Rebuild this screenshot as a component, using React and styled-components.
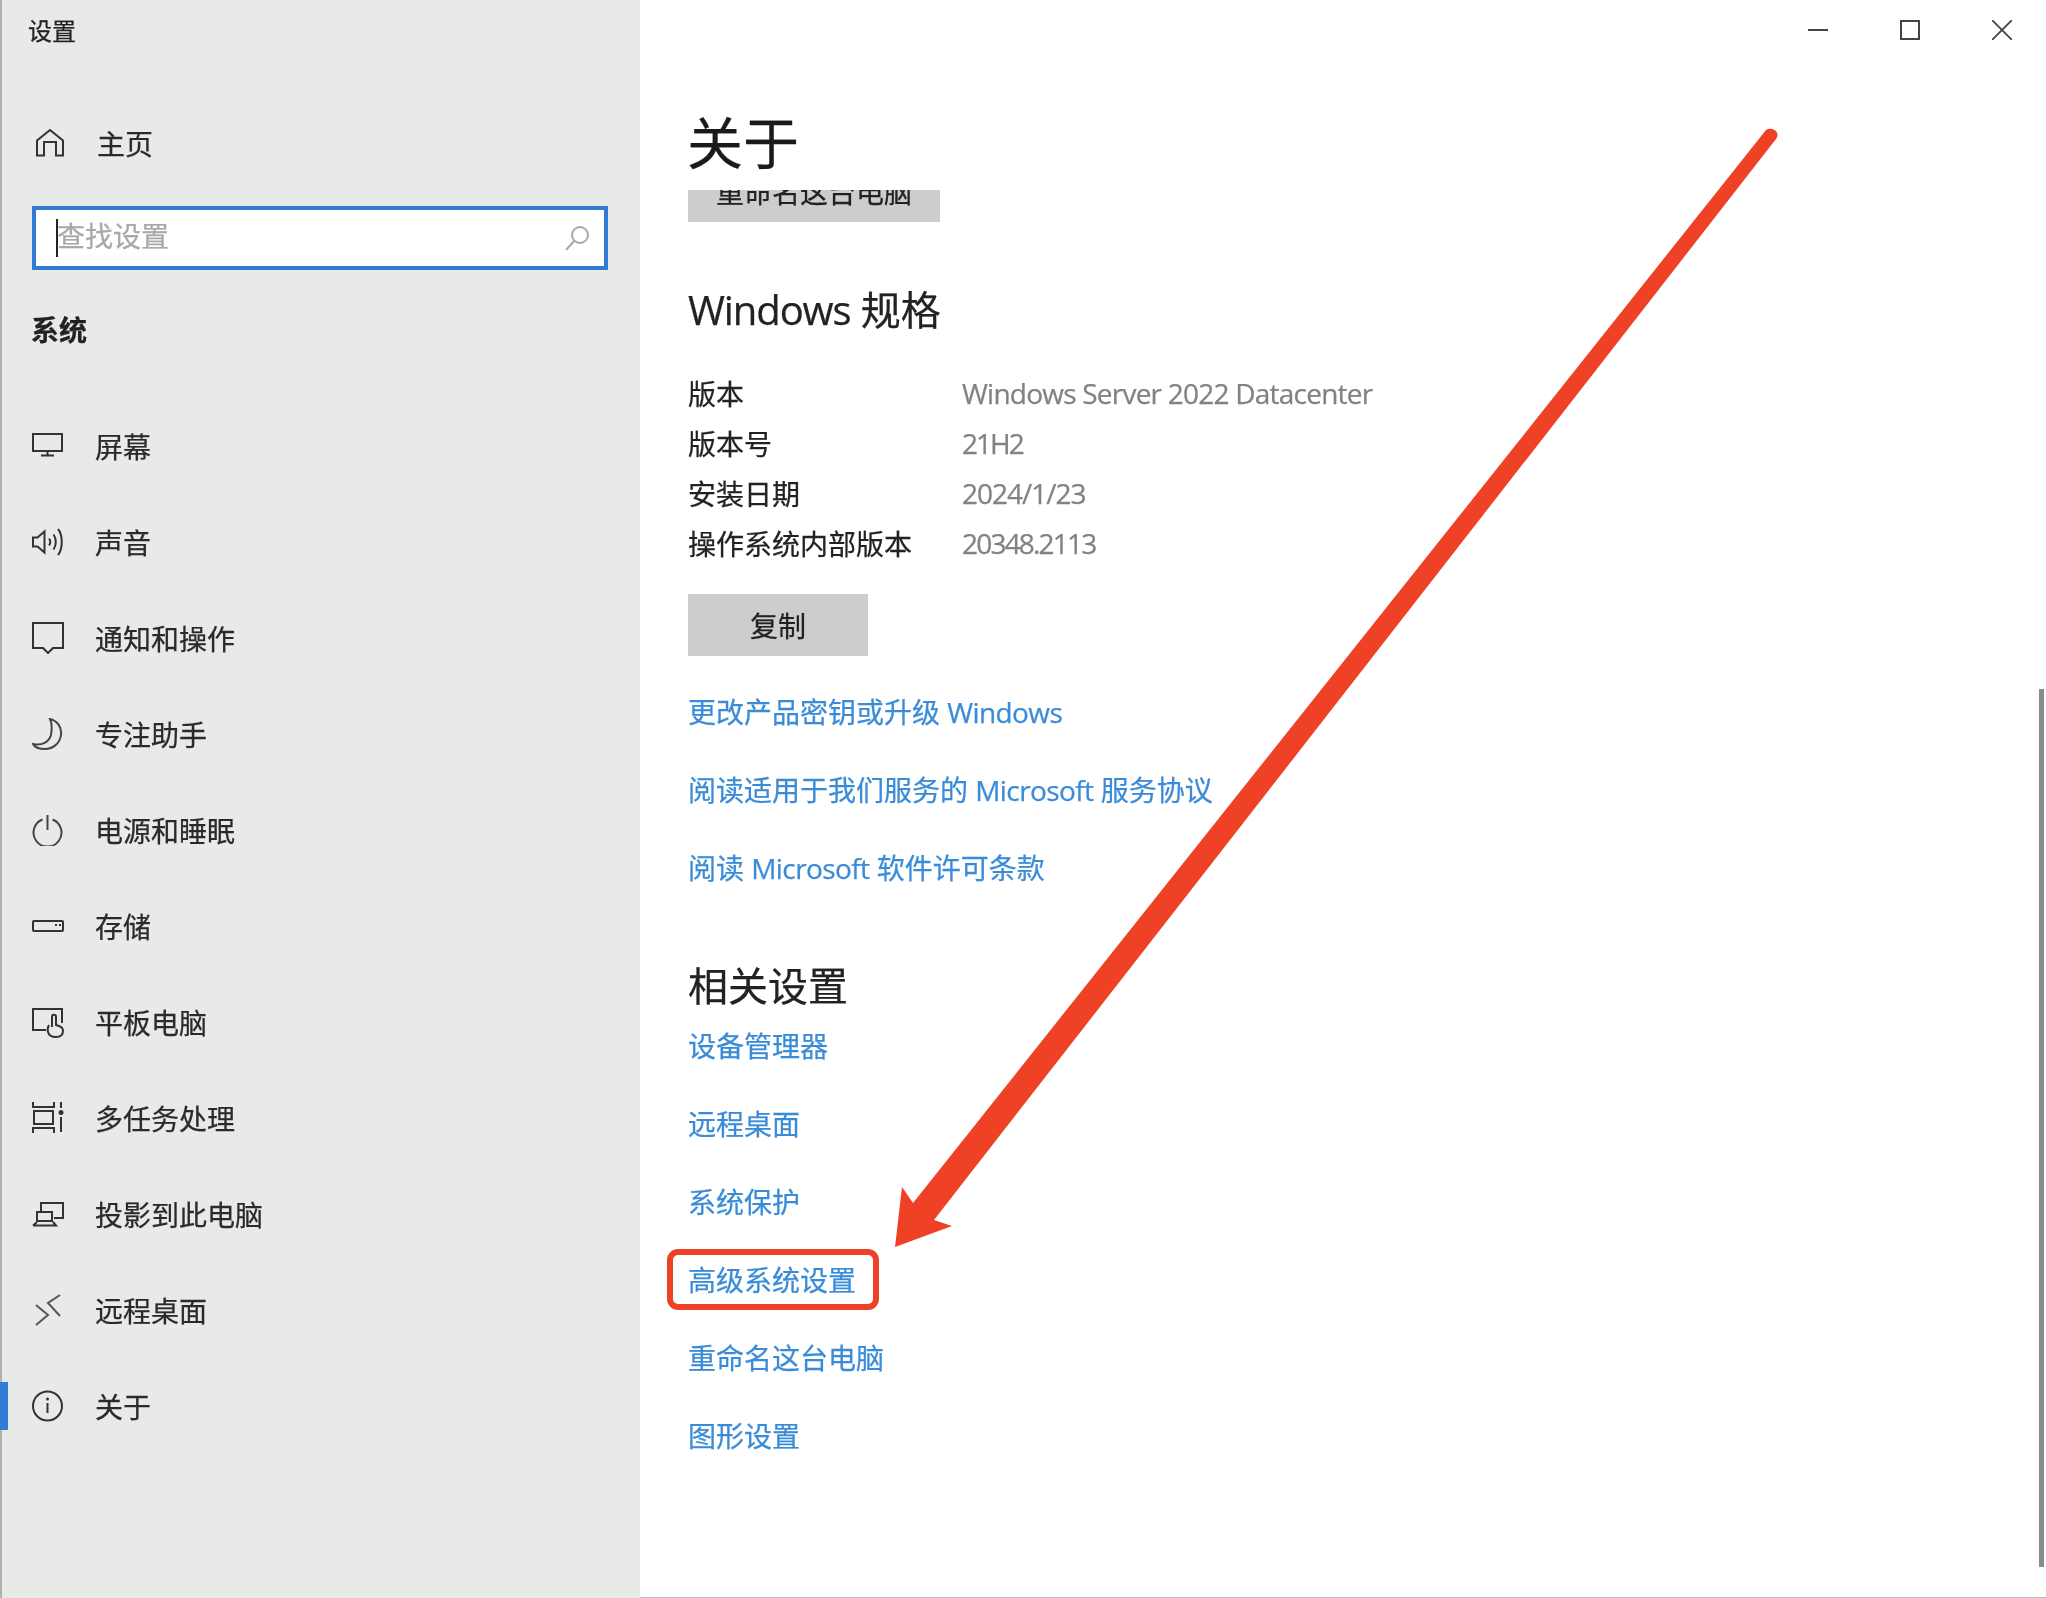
import React from "react";
import styled, { createGlobalStyle } from "styled-components";

const FONT = '"Open Sans", "Noto Sans CJK SC", sans-serif';

const GlobalStyle = createGlobalStyle`
  html, body {
    margin: 0;
    padding: 0;
    background: #fff;
  }
  * {
    box-sizing: border-box;
  }
`;

const Icon = ({ children, color = "#333", sw = 2 }) => (
  <svg width="32" height="32" viewBox="0 0 32 32" fill="none" stroke={color} strokeWidth={sw}>
    {children}
  </svg>
);

const HomeIcon = () => (
  <Icon>
    <path d="M5 28.500V13.500L18 3l13 10.500v15h-7V15H12v13.500z" />
  </Icon>
);
const MonitorIcon = () => (
  <Icon>
    <rect x="1" y="4" width="29" height="17" />
    <path d="M15.500 21v4M9 25.500h13" />
  </Icon>
);
const SoundIcon = () => (
  <Icon>
    <path d="M1 11.500v9h4.500l7 6V5.500l-7 6z" />
    <path d="M17 12.500c1.500 2 1.500 5 0 7M21.500 8.500c3 4 3 11 0 15M26 3c5 6 5 20 0 26" />
  </Icon>
);
const NoteIcon = () => (
  <Icon>
    <path d="M1 1h30v25H21l-5 5-5-5H1z" />
  </Icon>
);
const MoonIcon = () => (
  <Icon color="#444">
    <path d="M18 1c8 2 12 9 11 16-1 9-9 14-16 14-5 0-10-1-12-5 9 2 16-2 18-9 1-6 1-12-1-16z" />
  </Icon>
);
const PowerIcon = () => (
  <Icon color="#444">
    <path d="M10.500 5.500A14 14 0 1 0 20.500 5.500" />
    <path d="M15.500 1v15" />
  </Icon>
);
const StorageIcon = () => (
  <Icon>
    <rect x="1" y="11" width="30" height="10" rx="1" />
    <path d="M23 15h2M27 15h2" />
  </Icon>
);
const TabletIcon = () => (
  <Icon>
    <path d="M14 24H1V3h29v14" />
    <path d="M20 21V11c0-3 4-3 4 0v8l3 1c3 1 4 3 4 5 0 4-3 6-7 6s-7-1-8-5c-1-3 0-5 1-7" />
  </Icon>
);
const MultiIcon = () => (
  <Icon>
    <path d="M1 0v5h21V0M1 31v-5h21v5" />
    <rect x="2" y="9" width="19" height="13" />
    <path d="M29 0v6M29 15v15" />
    <circle cx="29" cy="10.500" r="2.500" fill="#333" stroke="none" />
  </Icon>
);
const ProjectIcon = () => (
  <Icon>
    <path d="M9 13V5h22v15H22" />
    <path d="M5 14h15v9H5zM1 27.500h23l-3-3.500M1 27.500l4-3.500" />
  </Icon>
);
const RemoteIcon = () => (
  <Icon color="#555">
    <path d="M4 11l12 10L4 31M28 1L16 9l12 13" />
  </Icon>
);
const InfoIcon = () => (
  <Icon>
    <circle cx="15.500" cy="16" r="14.500" />
    <path d="M15.500 13v10" />
    <circle cx="15.500" cy="9" r="1.500" fill="#333" stroke="none" />
  </Icon>
);

const NAV_ITEMS = [
  { label: "屏幕", icon: <MonitorIcon /> },
  { label: "声音", icon: <SoundIcon /> },
  { label: "通知和操作", icon: <NoteIcon /> },
  { label: "专注助手", icon: <MoonIcon /> },
  { label: "电源和睡眠", icon: <PowerIcon /> },
  { label: "存储", icon: <StorageIcon /> },
  { label: "平板电脑", icon: <TabletIcon /> },
  { label: "多任务处理", icon: <MultiIcon /> },
  { label: "投影到此电脑", icon: <ProjectIcon /> },
  { label: "远程桌面", icon: <RemoteIcon /> },
  { label: "关于", icon: <InfoIcon />, active: true },
];

// tight: letter spacing that brings the values to the reference's narrower digits
const SPECS = [
  { label: "版本", value: "Windows Server 2022 Datacenter", tight: -0.77 },
  { label: "版本号", value: "21H2", tight: -2 },
  { label: "安装日期", value: "2024/1/23", tight: -1 },
  { label: "操作系统内部版本", value: "20348.2113", tight: -1.8 },
];

const RELATED_LINKS = [
  { label: "设备管理器" },
  { label: "远程桌面" },
  { label: "系统保护" },
  { label: "高级系统设置", marked: true },
  { label: "重命名这台电脑" },
  { label: "图形设置" },
];

export default function App() {
  return (
    <Page lang="zh-CN">
      <GlobalStyle />
      <Sidebar>
        <AppTitle>设置</AppTitle>
        <HomeRow>
          <HomeIcon />
          <RowLabel>主页</RowLabel>
        </HomeRow>
        <SearchBox>
          <Caret />
          <Placeholder>查找设置</Placeholder>
          <svg width="26" height="26" viewBox="0 0 26 26" fill="none" stroke="#a8a8a8" strokeWidth="2">
            <circle cx="16" cy="10" r="8" />
            <path d="M10 16L2 25" />
          </svg>
        </SearchBox>
        <GroupTitle>系统</GroupTitle>
        <NavList>
          {NAV_ITEMS.map((item) => (
            <NavRow key={item.label} $active={item.active}>
              {item.icon}
              <RowLabel>{item.label}</RowLabel>
            </NavRow>
          ))}
        </NavList>
      </Sidebar>
      <Main>
        <WindowBar>
          <svg width="20" height="20" viewBox="0 0 20 20" fill="none" stroke="#444" strokeWidth="2">
            <path d="M0 10h20" />
          </svg>
          <svg width="20" height="20" viewBox="0 0 20 20" fill="none" stroke="#444" strokeWidth="2">
            <rect x="1" y="1" width="18" height="18" />
          </svg>
          <svg width="20" height="20" viewBox="0 0 20 20" fill="none" stroke="#444" strokeWidth="1.800">
            <path d="M0 0l20 20M20 0L0 20" />
          </svg>
        </WindowBar>
        <PageTitle>关于</PageTitle>
        <Scroller>
          <RenameButton>重命名这台电脑</RenameButton>
          <SectionTitle $top={68}>
            <TitleLatin>Windows</TitleLatin> 规格
          </SectionTitle>
          <SpecTable>
            {SPECS.map((spec) => (
              <SpecRow key={spec.label}>
                <SpecLabel>{spec.label}</SpecLabel>
                <SpecValue $tight={spec.tight}>{spec.value}</SpecValue>
              </SpecRow>
            ))}
          </SpecTable>
          <CopyButton>复制</CopyButton>
          <LinkList $top={16}>
            <LinkRow>
              <BlueLink>
                更改产品密钥或升级 <LinkLatin>Windows</LinkLatin>
              </BlueLink>
            </LinkRow>
            <LinkRow>
              <BlueLink>
                阅读适用于我们服务的 <LinkLatin>Microsoft</LinkLatin> 服务协议
              </BlueLink>
            </LinkRow>
            <LinkRow>
              <BlueLink>
                阅读 <LinkLatin>Microsoft</LinkLatin> 软件许可条款
              </BlueLink>
            </LinkRow>
          </LinkList>
          <SectionTitle $top={60}>相关设置</SectionTitle>
          <LinkList $top={0}>
            {RELATED_LINKS.map((link) => (
              <LinkRow key={link.label}>
                <BlueLink>{link.label}</BlueLink>
                {link.marked && <Highlight />}
              </LinkRow>
            ))}
          </LinkList>
        </Scroller>
        <ScrollThumb />
      </Main>
      <ArrowLayer width="2046" height="1598" viewBox="0 0 2046 1598">
        <path
          d="M913 1203L1766 130Q1771 127 1776 131Q1779 135 1776 139L934 1220L952 1226L895 1247L902 1187Z"
          fill="#ee4125"
        />
      </ArrowLayer>
    </Page>
  );
}

const Page = styled.div`
  position: relative;
  display: flex;
  width: 2046px;
  height: 1598px;
  overflow: hidden;
  font-family: ${FONT};
  font-size: 28px;
  color: #222;
  -webkit-text-stroke: 0.25px currentColor;
  filter: blur(0.7px);
`;

const Sidebar = styled.aside`
  display: flex;
  flex-direction: column;
  width: 640px;
  flex-shrink: 0;
  background: #e8eae8;
  border-left: 2px solid #aeb0ae;
`;

const AppTitle = styled.div`
  height: 62px;
  padding-left: 26px;
  font-size: 24px;
  line-height: 62px;
`;

const HomeRow = styled.div`
  display: flex;
  align-items: center;
  gap: 33px;
  height: 96px;
  margin-top: 33px;
  padding-left: 30px;
`;

const RowLabel = styled.span`
  font-size: 28px;
  color: #2a2a2a;
`;

const SearchBox = styled.div`
  display: flex;
  align-items: center;
  width: 576px;
  height: 64px;
  margin: 15px 0 0 30px;
  padding: 0 14px 0 20px;
  background: #fff;
  border: 4px solid #2f7bd5;
`;

const Caret = styled.span`
  width: 2px;
  height: 38px;
  margin-right: -1px;
  background: #222;
`;

const Placeholder = styled.span`
  flex: 1;
  padding-bottom: 6px;
  font-size: 28px;
  color: #a9a9a9;
`;

const GroupTitle = styled.div`
  height: 40px;
  margin-top: 41px;
  padding-left: 29px;
  font-size: 28px;
  font-weight: 700;
  line-height: 38px;
`;

const NavList = styled.nav`
  display: flex;
  flex-direction: column;
  margin-top: 47px;
`;

const NavRow = styled.div`
  position: relative;
  display: flex;
  align-items: center;
  gap: 31px;
  height: 96px;
  padding-left: 30px;

  ${(p) =>
    p.$active &&
    `
    &::before {
      content: "";
      position: absolute;
      left: -2px;
      top: 24px;
      width: 8px;
      height: 48px;
      background: #2f7bd5;
    }
  `}
`;

const Main = styled.main`
  position: relative;
  display: flex;
  flex-direction: column;
  flex: 1;
  min-width: 0;
  background: #fff;
  border-bottom: 1px solid #bdbdbd;
`;

const WindowBar = styled.div`
  display: flex;
  justify-content: flex-end;
  gap: 72px;
  height: 100px;
  padding: 20px 34px 0 0;
`;

const PageTitle = styled.h1`
  height: 90px;
  margin: 0;
  padding-left: 47px;
  font-size: 56px;
  font-weight: 400;
  line-height: 84px;
  color: #1a1a1a;
`;

const Scroller = styled.div`
  flex: 1;
  overflow: hidden;
  padding-left: 48px;
`;

const GreyButton = styled.div`
  display: flex;
  align-items: center;
  justify-content: center;
  height: 62px;
  background: #cccecb;
  font-size: 28px;
  color: #222;
`;

const RenameButton = styled(GreyButton)`
  width: 252px;
  margin-top: -30px;
`;

const CopyButton = styled(GreyButton)`
  width: 180px;
  margin-top: 26px;
`;

const SectionTitle = styled.h2`
  height: 40px;
  margin: ${(p) => p.$top}px 0 0;
  font-size: 40px;
  font-weight: 400;
  line-height: 40px;
  color: #222;
`;

const TitleLatin = styled.span`
  letter-spacing: -1.1px;
`;

const SpecTable = styled.div`
  display: flex;
  flex-direction: column;
  margin-top: 38px;
`;

const SpecRow = styled.div`
  display: flex;
  align-items: center;
  height: 50px;
`;

const SpecLabel = styled.span`
  width: 274px;
  color: #222;
`;

const SpecValue = styled.span`
  color: #828282;
  letter-spacing: ${(p) => p.$tight}px;
`;

const LinkList = styled.div`
  display: flex;
  flex-direction: column;
  margin-top: ${(p) => p.$top}px;
`;

const LinkRow = styled.div`
  position: relative;
  display: flex;
  align-items: center;
  height: 78px;
`;

const BlueLink = styled.a`
  color: #3a8bd8;
`;

const LinkLatin = styled.span`
  letter-spacing: -0.6px;
`;

const Highlight = styled.span`
  position: absolute;
  left: -21px;
  top: 9px;
  width: 212px;
  height: 61px;
  border: 6px solid #ee4125;
  border-radius: 11px;
`;

const ScrollThumb = styled.div`
  position: absolute;
  right: 2px;
  top: 689px;
  bottom: 30px;
  width: 5px;
  background: #8a8a8a;
`;

const ArrowLayer = styled.svg`
  position: absolute;
  left: 0;
  top: 0;
  pointer-events: none;
`;
